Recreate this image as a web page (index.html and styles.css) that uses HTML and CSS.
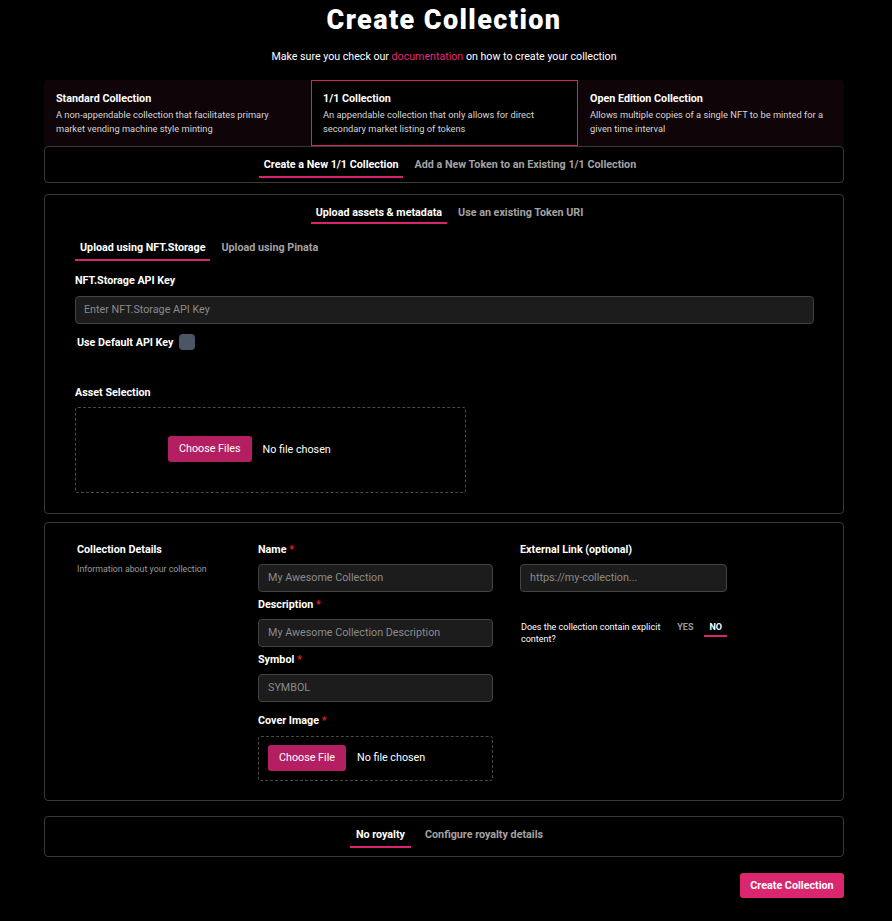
FILE: index.html
```html
<!DOCTYPE html>
<html lang="en">
<head>
<meta charset="utf-8">
<title>Create Collection</title>
<link rel="stylesheet" href="styles.css">
</head>
<body>
<main class="page">
  <h1 class="title">Create Collection</h1>
  <p class="subtitle">Make sure you check our <a class="link" href="#">documentation</a> on how to create your collection</p>

  <div class="types">
    <div class="type">
      <div class="type-title">Standard Collection</div>
      <div class="type-desc">A non-appendable collection that facilitates primary market vending machine style minting</div>
    </div>
    <div class="type type-active">
      <div class="type-title">1/1 Collection</div>
      <div class="type-desc">An appendable collection that only allows for direct secondary market listing of tokens</div>
    </div>
    <div class="type">
      <div class="type-title">Open Edition Collection</div>
      <div class="type-desc">Allows multiple copies of a single NFT to be minted for a given time interval</div>
    </div>
  </div>

  <div class="box box-mode">
    <div class="tabs tabs-center">
      <span class="tab tab-active">Create a New 1/1 Collection</span>
      <span class="tab">Add a New Token to an Existing 1/1 Collection</span>
    </div>
  </div>

  <section class="box box-assets">
    <div class="tabs tabs-center tabs-assets">
      <span class="tab tab-active">Upload assets &amp; metadata</span>
      <span class="tab">Use an existing Token URI</span>
    </div>
    <div class="tabs tabs-sub">
      <span class="tab tab-active">Upload using NFT.Storage</span>
      <span class="tab">Upload using Pinata</span>
    </div>
    <label class="label label-key">NFT.Storage API Key</label>
    <div class="input input-wide">Enter NFT.Storage API Key</div>
    <div class="check-row">
      <span class="check-label">Use Default API Key</span>
      <span class="checkbox"></span>
    </div>
    <label class="label label-asset">Asset Selection</label>
    <div class="drop drop-assets">
      <span class="file-btn">Choose Files</span>
      <span class="file-text">No file chosen</span>
    </div>
  </section>

  <section class="box box-details">
    <div class="col col-info">
      <div class="info-title">Collection Details</div>
      <div class="info-desc">Information about your collection</div>
    </div>
    <div class="col col-main">
      <label class="label">Name <span class="req">*</span></label>
      <div class="input">My Awesome Collection</div>
      <label class="label">Description <span class="req">*</span></label>
      <div class="input">My Awesome Collection Description</div>
      <label class="label">Symbol <span class="req">*</span></label>
      <div class="input">SYMBOL</div>
      <label class="label label-cover">Cover Image <span class="req">*</span></label>
      <div class="drop drop-cover">
        <span class="file-btn">Choose File</span>
        <span class="file-text">No file chosen</span>
      </div>
    </div>
    <div class="col col-side">
      <label class="label">External Link (optional)</label>
      <div class="input input-link">https://my-collection...</div>
      <div class="explicit">
        <div class="explicit-q">Does the collection contain explicit content?</div>
        <div class="explicit-opts">
          <span class="opt">YES</span>
          <span class="opt opt-active">NO</span>
        </div>
      </div>
    </div>
  </section>

  <div class="box box-royalty">
    <div class="tabs tabs-center tabs-royalty">
      <span class="tab tab-active tab-wide">No royalty</span>
      <span class="tab">Configure royalty details</span>
    </div>
  </div>

  <div class="actions">
    <button class="submit" type="button">Create Collection</button>
  </div>
</main>
</body>
</html>
```

FILE: styles.css
```css
* { box-sizing: border-box; }
html, body { margin: 0; padding: 0; background: #000; }
body {
  font-family: Roboto, "Liberation Sans", Arial, sans-serif;
  color: #fff;
  font-size: 11px;
}
.page {
  width: 800px;
  margin-left: 44px;
  padding-bottom: 20px;
}
.title {
  margin: 0;
  text-align: center;
  font-size: 27px;
  line-height: 41px;
  font-weight: 900;
  letter-spacing: 1.4px;
}
.subtitle {
  margin: 8px 0 0;
  text-align: center;
  line-height: 16px;
  font-size: 10.65px;
}
.link { color: #e0287a; text-decoration: none; }

.types {
  margin-top: 15px;
  display: grid;
  grid-template-columns: 267px 267px 266px;
  background: #0f0407;
  border-radius: 4px 4px 0 0;
}
.type {
  border: 1px solid transparent;
  padding: 11px 11px 10px;
  height: 66px;
}
.type-active { border-color: #d0246c; background: #000; }
.type-title { font-weight: 700; font-size: 10.75px; line-height: 14px; }
.type-desc { font-size: 9.3px; line-height: 14px; color: #d6d6d6; margin-top: 2px; }

.box {
  border: 1px solid #393939;
  border-radius: 4px;
  background: #000;
}
.tabs { display: flex; gap: 6px; }
.tabs-center { justify-content: center; padding-left: 12px; }
.tab {
  padding: 0 5px 2px;
  line-height: 16px;
  font-weight: 700;
  font-size: 10.75px;
  color: #a3a3a3;
  border-bottom: 2px solid transparent;
}
.tab-active { color: #fff; border-bottom-color: #d6246e; }
.tab-wide { padding: 0 6px 2px; }

.box-mode { padding: 10px 0 4px; }
.box-mode .tab { padding-bottom: 3px; }

.box-assets { margin-top: 11px; padding: 10px 29px 20px 30px; }
.tabs-assets { padding-left: 10px; }
.tabs-assets .tab { padding-bottom: 1px; }
.tabs-sub { margin-top: 16px; }
.tabs-sub .tab { padding-bottom: 3px; }

.label {
  display: block;
  font-weight: 700;
  font-size: 10.75px;
  line-height: 16px;
  margin-bottom: 6px;
}
.label-key { margin-top: 12px; margin-bottom: 7px; }
.req { color: #e11d2e; }
.input {
  height: 28px;
  background: #1c1c1c;
  border: 1px solid #434343;
  border-radius: 4px;
  color: #8a8a8a;
  font-size: 10.75px;
  line-height: 26px;
  padding: 0 9px;
  margin-bottom: 5px;
}
.input-wide { padding: 0 8px; margin-bottom: 0; }
.check-row {
  margin-top: 10px;
  display: flex;
  align-items: center;
  gap: 6px;
  height: 16px;
  padding-left: 2px;
}
.check-label { font-weight: 700; font-size: 10.75px; }
.checkbox {
  width: 16px; height: 16px;
  background: #4b5563;
  border-radius: 4px;
}
.label-asset { margin-top: 35px; margin-bottom: 6px; }
.drop {
  border: 1px dashed #4a4a4a;
  border-radius: 3px;
  display: flex;
  align-items: center;
  gap: 11px;
}
.drop-assets { width: 391px; height: 86px; padding-left: 92px; padding-bottom: 2px; }
.file-btn {
  background: #b31f60;
  color: #fff;
  border-radius: 3px;
  font-size: 10.75px;
  line-height: 26px;
  padding: 0 11px;
}
.file-text { font-size: 10.75px; }

.box-details {
  margin-top: 8px;
  padding: 19px 0 19px 32px;
  display: flex;
}
.col-info { width: 181px; }
.info-title { font-weight: 700; font-size: 10.75px; line-height: 16px; }
.info-desc { font-size: 8.8px; color: #9b9b9b; line-height: 16px; margin-top: 3px; }
.col-main { width: 235px; }
.col-side { width: 207px; margin-left: 27px; }
.label-cover { margin-top: 11px; margin-bottom: 7px; }
.drop-cover { height: 45px; padding-left: 9px; padding-bottom: 2px; }
.input-link { margin-bottom: 0; }
.explicit {
  margin-top: 29px;
  display: flex;
  align-items: flex-start;
  gap: 8px;
  padding-left: 1px;
}
.explicit-q { width: 148px; font-size: 9px; line-height: 12px; }
.explicit-opts { display: flex; gap: 6px; }
.opt {
  font-size: 9px;
  line-height: 12px;
  font-weight: 700;
  color: #9a9a9a;
  padding: 0 5px 2px;
  border-bottom: 2px solid transparent;
}
.opt-active { color: #fff; border-bottom-color: #d6246e; }

.box-royalty { margin-top: 15px; padding: 10px 0 8px; }
.tabs-royalty { gap: 9px; padding-left: 10px; }
.box-royalty .tab { padding-bottom: 3px; }

.actions { display: flex; justify-content: flex-end; margin-top: 16px; }
.submit {
  background: #d9266f;
  color: #fff;
  border: 0;
  border-radius: 3px;
  font-family: Roboto, "Liberation Sans", Arial, sans-serif;
  font-weight: 700;
  font-size: 10.75px;
  height: 25px;
  width: 104px;
  padding: 0;
}
```
